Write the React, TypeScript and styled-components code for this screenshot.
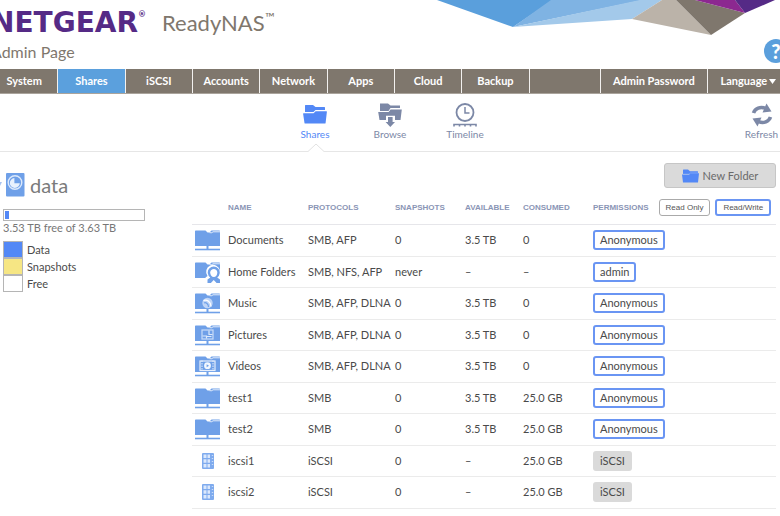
import React from 'react';
import styled, { createGlobalStyle } from 'styled-components';

const GlobalStyle = createGlobalStyle`
  * { box-sizing: border-box; }
  body { margin: 0; background: #fff; overflow: hidden; }
  button { font-family: inherit; cursor: pointer; }
`;

const Page = styled.div`
  margin: 0 -9px;
  font-family: Lato, "Noto Sans", sans-serif;
  font-size: 11px;
  line-height: 14px;
  color: #4a4a4a;
`;

/* ---------- header ---------- */

const Header = styled.header`
  position: relative;
  display: flex;
  flex-direction: column;
  height: 69px;
  padding-top: 8px;
`;

const BrandRow = styled.div`
  display: flex;
  align-items: center;
  height: 30px;
  gap: 16px;
`;

const Logo = styled.span`
  display: flex;
  align-items: flex-start;
  font-family: "DejaVu Sans", sans-serif;
  font-size: 28px;
  line-height: 30px;
  font-weight: 700;
  color: #552a86;
`;

const Registered = styled.span`
  font-size: 8px;
  line-height: 14px;
`;

const Product = styled.span`
  display: flex;
  align-items: flex-start;
  font-size: 22px;
  line-height: 30px;
  color: #7f776d;
`;

const Trademark = styled.span`
  font-size: 13px;
  line-height: 18px;
`;

const Subtitle = styled.h1`
  margin: 4px 0 0;
  font-size: 16px;
  line-height: 20px;
  font-weight: 400;
  color: #7f776d;
`;

const Mosaic = styled.svg`
  position: absolute;
  top: 0;
  right: 11px;
`;

const HelpButton = styled.button`
  position: absolute;
  right: 1px;
  bottom: 6px;
  width: 24px;
  height: 24px;
  padding: 0;
  border: 0;
  border-radius: 50%;
  background: #5b9fdc;
  color: #fff;
  font-size: 20px;
  line-height: 24px;
  font-weight: 900;
`;

/* ---------- main navigation ---------- */

const Nav = styled.nav`
  display: grid;
  grid-template-columns: repeat(8, 67fr) 71fr 107fr 82fr;
  gap: 1px;
  height: 25px;
  background: #f3f1ef;
  border-bottom: 1px solid #aaa49c;
`;

const NavLink = styled.a<{ $active?: boolean }>`
  display: flex;
  align-items: center;
  justify-content: center;
  gap: 2px;
  background: ${(p) => (p.$active ? '#5ba0dd' : '#7f776d')};
  color: #fff;
  font-weight: 700;
  text-decoration: none;
  white-space: nowrap;
`;

const NavFiller = styled.span`
  background: #7f776d;
`;

/* ---------- toolbar ---------- */

const Toolbar = styled.div`
  display: grid;
  grid-template-columns: 1fr auto 1fr;
  height: 58px;
  padding-right: 9px;
  border-bottom: 1px solid #e6e6e6;
`;

const ToolGroup = styled.div`
  grid-column: 2;
  display: flex;
  margin-left: 9px;
`;

const ToolButton = styled.button<{ $active?: boolean; $end?: boolean }>`
  position: relative;
  display: flex;
  flex-direction: column;
  align-items: center;
  justify-self: ${(p) => (p.$end ? 'end' : 'auto')};
  width: ${(p) => (p.$end ? 37 : 75)}px;
  padding: 9px 0 0;
  border: 0;
  background: none;
  color: ${(p) => (p.$active ? '#5388f6' : '#7c88a6')};
  font-size: 10px;
  line-height: 14px;
`;

const Notch = styled.svg`
  position: absolute;
  left: 30px;
  bottom: -1px;
`;

/* ---------- body ---------- */

const Body = styled.div`
  display: grid;
  grid-template-columns: 155px 1fr;
  gap: 37px;
  padding: 11px 13px 0 9px;
`;

const Sidebar = styled.aside`
  display: flex;
  flex-direction: column;
  padding: 10px 10px 0 3px;
`;

const VolumeTitle = styled.h2`
  display: flex;
  align-items: center;
  gap: 5px;
  height: 24px;
  margin: 0 0 12px -4px;
  font-size: 20px;
  line-height: 24px;
  font-weight: 400;
  color: #7b7b7b;
`;

const Expander = styled.svg`
  margin-right: -3px;
`;

const CapacityBar = styled.div`
  display: flex;
  height: 12px;
  padding: 1px;
  border: 1px solid #b5b5b5;
`;

const CapacityUsed = styled.div`
  background: #5388f6;
`;

const CapacityText = styled.p`
  margin: 0 0 7px;
  font-size: 11px;
  line-height: 14px;
  white-space: nowrap;
  color: #777;
`;

const Legend = styled.ul`
  display: flex;
  flex-direction: column;
  gap: 2px;
  margin: 0;
  padding: 0;
  list-style: none;
`;

const LegendItem = styled.li<{ $color: string }>`
  display: flex;
  align-items: center;
  gap: 4px;
  height: 15px;

  &::before {
    content: '';
    width: 18px;
    height: 15px;
    border: 1px solid #b5b5b5;
    background: ${(p) => p.$color};
  }
`;

const Main = styled.main`
  display: flex;
  flex-direction: column;
`;

const NewFolderButton = styled.button`
  display: flex;
  align-items: center;
  align-self: flex-end;
  justify-content: center;
  gap: 4px;
  width: 112px;
  height: 25px;
  padding: 0;
  border: 1px solid #c6c6c6;
  border-radius: 3px;
  background: #dadada;
  color: #6a6a6a;
  font-size: 11px;
`;

const ShareTable = styled.table`
  width: 100%;
  margin-top: 4px;
  table-layout: fixed;
  border-collapse: collapse;
`;

const HeadCell = styled.th<{ $width?: number }>`
  width: ${(p) => (p.$width ? `${p.$width}px` : 'auto')};
  height: 32px;
  padding: 0;
  border-bottom: 1px solid #e6e6ea;
  text-align: left;
  white-space: nowrap;
  font-family: "Liberation Sans", Arial, sans-serif;
  font-size: 8px;
  line-height: 10px;
  color: #8a95b5;
`;

const Row = styled.tr`
  height: 31px;

  &:nth-child(odd) {
    height: 32px;
  }
`;

const Cell = styled.td`
  padding: 0;
  border-bottom: 1px solid #ebebeb;
  vertical-align: middle;
  white-space: nowrap;

  svg {
    display: block;
    margin-left: 3px;
  }
`;

const PermissionHead = styled.div`
  display: flex;
  align-items: center;
  gap: 5px;
`;

const PermissionTitle = styled.span`
  margin-right: 5px;
`;

const FilterButton = styled.button<{ $active?: boolean }>`
  height: 17px;
  padding: 0 6px;
  border: ${(p) => (p.$active ? '2px solid #6a95f3' : '1px solid #aaa')};
  border-radius: 3px;
  background: #fff;
  color: #555;
  font-size: 8px;
  line-height: 12px;
`;

const PermissionButton = styled.button<{ $muted?: boolean }>`
  display: block;
  height: 20px;
  padding: 0 5px;
  border: 2px solid ${(p) => (p.$muted ? '#dadada' : '#6a95f3')};
  border-radius: 3px;
  background: ${(p) => (p.$muted ? '#dadada' : '#fff')};
  color: #4a4a4a;
  font-size: 11px;
  line-height: 14px;
`;

/* ---------- icons ---------- */

const FolderIcon = () => (
  <svg width="24" height="24" viewBox="0 0 24 24" fill="currentColor" aria-hidden="true">
    <path d="M2 8V2.6Q2 2 2.6 2H10L12.5 4H21.4Q22 4 22 4.6V7H12.5L10.5 9H2Z" />
    <path d="M.6 10.2H10.6L12.6 8.2H23.4Q24 8.2 23.9 8.8L22.6 19.9Q22.5 20.5 21.9 20.5H2.2Q1.6 20.5 1.5 19.9L.1 10.8Q0 10.2 .6 10.2Z" />
  </svg>
);

const BrowseIcon = () => (
  <svg width="24" height="24" viewBox="0 0 24 24" fill="currentColor" aria-hidden="true">
    <path d="M2 8V.6H10L12.5 2.6H22V5H12.5L10.5 8Z" />
    <path d="M.2 9H10.6L12.6 6.6H23.8L22.5 17H17V12.8H8V17H1.5Z" />
    <path d="M10 14H14.6V19H17L12.3 24L7.6 19H10Z" />
  </svg>
);

const TimelineIcon = () => (
  <svg width="24" height="24" viewBox="0 0 24 24" fill="none" stroke="currentColor" aria-hidden="true">
    <circle cx="12" cy="9.5" r="8.5" strokeWidth="1.8" />
    <path d="M12 4V10H16.5" strokeWidth="1.5" />
    <path d="M1 23.5V21.5H23V23.5M6.5 21V23.5M12 21V23.5M17.5 21V23.5" strokeWidth="1.6" />
  </svg>
);

const RefreshIcon = () => (
  <svg width="22" height="24" viewBox="0 0 22 24" aria-hidden="true">
    <path d="M2.5 10C4 5.5 9.5 3 14.5 5.5" fill="none" stroke="currentColor" strokeWidth="3.6" />
    <path d="M15.5 .5L20.5 8.5L11.5 9.5Z" fill="currentColor" />
    <path d="M19.5 14C18 18.5 12.5 21 7.5 18.5" fill="none" stroke="currentColor" strokeWidth="3.6" />
    <path d="M6.5 23.5L1.5 15.5L10.5 14.5Z" fill="currentColor" />
  </svg>
);

const VolumeIcon = () => (
  <svg width="19" height="24" viewBox="0 0 19 24" aria-hidden="true">
    <rect width="18.5" height="23.5" rx="1" fill="#6fa0e8" />
    <circle cx="9" cy="9.5" r="6.8" fill="none" stroke="#dce9fb" strokeWidth="1.4" />
    <path d="M8.4 10.2V5A5 5 0 1 0 13.8 10.2Z" fill="#e8f1fd" />
    <path d="M10 8.6V4.2A4.8 4.8 0 0 1 14.4 8.6Z" fill="#6fa0e8" />
  </svg>
);

type ShareKind = 'folder' | 'home' | 'music' | 'pictures' | 'videos' | 'lun';

const ShareIcon = ({ kind }: { kind: ShareKind }) => {
  if (kind === 'lun') {
    return (
      <svg width="26" height="22" viewBox="0 0 26 22" aria-hidden="true">
        <rect x="7" y="3" width="12" height="16" rx="1" fill="#7fabee" />
        <path d="M8.5 4.5H11.5V8H8.5ZM8.5 9.3H11.5V12.8H8.5ZM8.5 14.1H11.5V17.5H8.5ZM12.5 4.5H15V8H12.5ZM12.5 9.3H15V12.8H12.5ZM12.5 14.1H15V17.5H12.5Z" fill="#dbe8fc" />
        <path d="M16.8 5.5H18.2M16.8 8.5H18.2M16.8 11.5H18.2M16.8 14.5H18.2" stroke="#c9dcf8" />
      </svg>
    );
  }
  return (
    <svg width="26" height="22" viewBox="0 0 26 22" fill="none" aria-hidden="true">
      <path d="M0 2.2Q0 1.5 .7 1.5H10.5L12.5 3.5H14.5L16.5 1.5H24.3Q25 1.5 25 2.2V17H0Z" fill="#6fa0e8" />
      <path d="M14.5 3.7H16.8L18 2.8H25" stroke="#fff" strokeWidth=".8" />
      {kind === 'home' ? (
        <>
          <path d="M10.5 22V16.5L12.5 15A7 7 0 1 1 25 9.5V22Z" fill="#fff" />
          <path d="M12.5 22V18.5L15.3 16.5A6 6 0 1 1 22.2 16.5L25 18.5V22H21.6L18.7 19L15.9 22Z" fill="#6fa0e8" />
          <path d="M15.2 11.5C15.2 9.5 17 8 18.8 8C20.6 8 22.3 9.5 22.3 11.5C22.3 14 20.8 16 18.8 16C16.8 16 15.2 14 15.2 11.5Z" fill="#fff" />
        </>
      ) : (
        <>
          <path d="M12.5 17V20.5" stroke="#6fa0e8" strokeWidth="2" />
          <path d="M0 20.5H25" stroke="#6fa0e8" strokeWidth="1.6" />
        </>
      )}
      {kind === 'music' && (
        <>
          <circle cx="12.5" cy="11" r="5.2" fill="#bfd5f7" />
          <path d="M8.5 8.5C12 7 16 10 16 14.5" stroke="#fff" strokeWidth="1.2" />
          <path d="M9 11C11 10 13.5 12 13.5 15" stroke="#6fa0e8" strokeWidth="1.2" />
        </>
      )}
      {kind === 'pictures' && (
        <>
          <rect x="7" y="6" width="11" height="9" stroke="#c9dcf8" strokeWidth="1.2" />
          <path d="M7.5 12H11.5V14.5M11.5 12.5H16.5M14 6.5V10.5H17.5" stroke="#dce9fb" strokeWidth="1.2" />
        </>
      )}
      {kind === 'videos' && (
        <>
          <rect x="5" y="6" width="15" height="9.5" stroke="#e6effc" strokeWidth="1.2" />
          <path d="M7 5.5V15.5M18 5.5V15.5" stroke="#e6effc" strokeDasharray="1.5 1" />
          <circle cx="12.5" cy="10.7" r="3.4" fill="#f3f8ff" />
          <path d="M11.6 9.2V12.2L14 10.7Z" fill="#6fa0e8" />
        </>
      )}
    </svg>
  );
};

/* ---------- data ---------- */

interface Share {
  kind: ShareKind;
  name: string;
  protocols: string;
  snapshots: string;
  available: string;
  consumed: string;
  permission: string;
}

const share = (
  kind: ShareKind,
  name: string,
  protocols: string,
  snapshots: string,
  available: string,
  consumed: string,
  permission: string,
): Share => ({ kind, name, protocols, snapshots, available, consumed, permission });

const shares: Share[] = [
  share('folder', 'Documents', 'SMB, AFP', '0', '3.5 TB', '0', 'Anonymous'),
  share('home', 'Home Folders', 'SMB, NFS, AFP', 'never', '–', '–', 'admin'),
  share('music', 'Music', 'SMB, AFP, DLNA', '0', '3.5 TB', '0', 'Anonymous'),
  share('pictures', 'Pictures', 'SMB, AFP, DLNA', '0', '3.5 TB', '0', 'Anonymous'),
  share('videos', 'Videos', 'SMB, AFP, DLNA', '0', '3.5 TB', '0', 'Anonymous'),
  share('folder', 'test1', 'SMB', '0', '3.5 TB', '25.0 GB', 'Anonymous'),
  share('folder', 'test2', 'SMB', '0', '3.5 TB', '25.0 GB', 'Anonymous'),
  share('lun', 'iscsi1', 'iSCSI', '0', '–', '25.0 GB', 'iSCSI'),
  share('lun', 'iscsi2', 'iSCSI', '0', '–', '25.0 GB', 'iSCSI'),
];

const sections = ['System', 'Shares', 'iSCSI', 'Accounts', 'Network', 'Apps', 'Cloud', 'Backup'];

const usedPercent = 3;

export default function App() {
  return (
    <Page>
      <GlobalStyle />
      <Header>
        <Mosaic width="341" height="36" viewBox="0 0 341 36" aria-hidden="true">
          <path d="M0 0L76 27L116 0Z" fill="#5a9fdc" />
          <path d="M114 0L76 27L206 0Z" fill="#7fb3e3" />
          <path d="M203 0L76 27L195 19L225 0Z" fill="#a3c9ea" />
          <path d="M225 0L195 19L274 35L239 0Z" fill="#bbb3a9" />
          <path d="M239 0L274 35L308 13L258 0Z" fill="#7f776d" />
          <path d="M258 0L308 13L298 0Z" fill="#8c2890" />
          <path d="M298 0L308 13L338 0Z" fill="#552a86" />
        </Mosaic>
        <BrandRow>
          <Logo>
            NETGEAR<Registered>®</Registered>
          </Logo>
          <Product>
            ReadyNAS<Trademark>™</Trademark>
          </Product>
        </BrandRow>
        <Subtitle>Admin Page</Subtitle>
        <HelpButton aria-label="Help">?</HelpButton>
      </Header>

      <Nav>
        {sections.map((label) => (
          <NavLink href="#" key={label} $active={label === 'Shares'}>
            {label}
          </NavLink>
        ))}
        <NavFiller />
        <NavLink href="#">Admin Password</NavLink>
        <NavLink href="#">
          Language
          <svg width="7" height="5" viewBox="0 0 7 5" aria-hidden="true">
            <path d="M0 0H7L3.5 5Z" fill="#fff" />
          </svg>
        </NavLink>
      </Nav>

      <Toolbar>
        <ToolGroup>
          <ToolButton $active>
            <FolderIcon />
            Shares
            <Notch width="16" height="9" viewBox="0 0 16 9" aria-hidden="true">
              <path d="M0 8.5L8 1L16 8.5V9H0Z" fill="#fff" />
              <path d="M0 8.5L8 1L16 8.5" fill="none" stroke="#e2e2e2" />
            </Notch>
          </ToolButton>
          <ToolButton>
            <BrowseIcon />
            Browse
          </ToolButton>
          <ToolButton>
            <TimelineIcon />
            Timeline
          </ToolButton>
        </ToolGroup>
        <ToolButton $end>
          <RefreshIcon />
          Refresh
        </ToolButton>
      </Toolbar>

      <Body>
        <Sidebar>
          <VolumeTitle>
            <Expander width="5" height="8" viewBox="0 0 5 8" aria-hidden="true">
              <path d="M0 1H3L1 5Z" fill="#a9c4ef" />
            </Expander>
            <VolumeIcon />
            data
          </VolumeTitle>
          <CapacityBar>
            <CapacityUsed style={{ width: `${usedPercent}%` }} />
          </CapacityBar>
          <CapacityText>3.53 TB free of 3.63 TB</CapacityText>
          <Legend>
            <LegendItem $color="#5388f6">Data</LegendItem>
            <LegendItem $color="#f6e684">Snapshots</LegendItem>
            <LegendItem $color="#fff">Free</LegendItem>
          </Legend>
        </Sidebar>

        <Main>
          <NewFolderButton>
            <svg width="17" height="14" viewBox="0 0 17 14" aria-hidden="true">
              <path d="M1 5V1Q1 .5 1.5 .5H6L8 2.2H15.5Q16 2.2 16 2.7V5Z" fill="#5388f6" />
              <path d="M0 5.5H7L8.5 4.3H17L16 13.5H1Z" fill="#5388f6" />
              <path d="M1 5.2H7L8.5 4H16" stroke="#9fbdfa" strokeWidth=".6" fill="none" />
            </svg>
            New Folder
          </NewFolderButton>
          <ShareTable>
            <thead>
              <tr>
                <HeadCell $width={36} aria-label="Type" />
                <HeadCell $width={80}>NAME</HeadCell>
                <HeadCell $width={87}>PROTOCOLS</HeadCell>
                <HeadCell $width={70}>SNAPSHOTS</HeadCell>
                <HeadCell $width={58}>AVAILABLE</HeadCell>
                <HeadCell $width={70}>CONSUMED</HeadCell>
                <HeadCell>
                  <PermissionHead>
                    <PermissionTitle>PERMISSIONS</PermissionTitle>
                    <FilterButton>Read Only</FilterButton>
                    <FilterButton $active>Read/Write</FilterButton>
                  </PermissionHead>
                </HeadCell>
              </tr>
            </thead>
            <tbody>
              {shares.map((s) => (
                <Row key={s.name}>
                  <Cell>
                    <ShareIcon kind={s.kind} />
                  </Cell>
                  <Cell>{s.name}</Cell>
                  <Cell>{s.protocols}</Cell>
                  <Cell>{s.snapshots}</Cell>
                  <Cell>{s.available}</Cell>
                  <Cell>{s.consumed}</Cell>
                  <Cell>
                    <PermissionButton $muted={s.kind === 'lun'}>{s.permission}</PermissionButton>
                  </Cell>
                </Row>
              ))}
            </tbody>
          </ShareTable>
        </Main>
      </Body>
    </Page>
  );
}
